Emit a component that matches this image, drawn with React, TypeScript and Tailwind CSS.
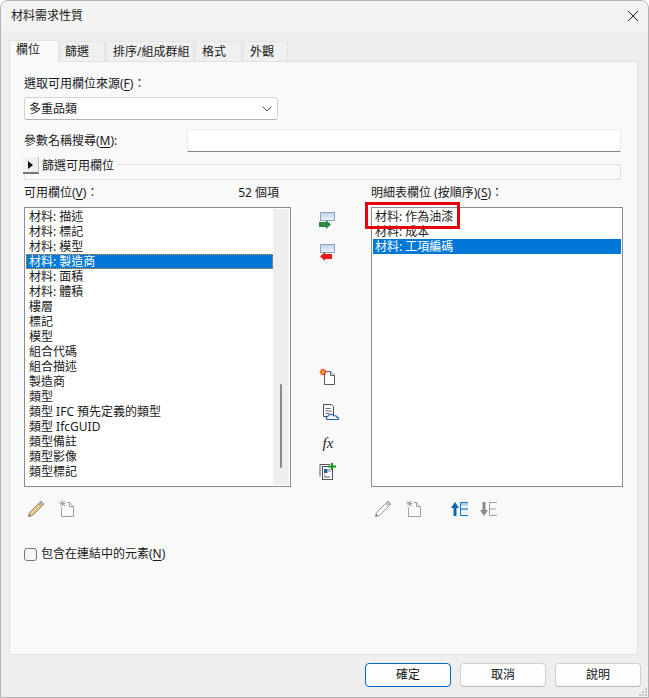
import React from "react";

const leftItems = ["材料: 描述","材料: 標記","材料: 模型","材料: 製造商","材料: 面積","材料: 體積","樓層","標記","模型","組合代碼","組合描述","製造商","類型","類型 IFC 預先定義的類型","類型 IfcGUID","類型備註","類型影像","類型標記"];

const U = ({ children }: { children: React.ReactNode }) => <span className="underline underline-offset-2">{children}</span>;

const Bar = ({ color, dir }: { color: string; dir: "r" | "l" }) => (
  <svg width="18" height="18" viewBox="0 0 18 18" className="block">
    <defs>
      <linearGradient id={"g" + dir} x1="0" y1="0" x2="0" y2="1">
        <stop offset="0" stopColor="#b9d3f0" />
        <stop offset="1" stopColor="#eef4fb" />
      </linearGradient>
    </defs>
    <rect x="2.5" y="0.5" width="14" height="8" fill={`url(#g${dir})`} stroke="#8fa3bb" />
    {dir === "r"
      ? <path d="M0 10h7V8l5 4.5-5 4.5v-2H0z" fill={color} transform="translate(1 0)" />
      : <path d="M13 10H6V8l-5 4.5L6 17v-2h7z" fill={color} transform="translate(1 0)" />}
  </svg>
);

const NewDoc = () => (
  <svg width="18" height="18" viewBox="0 0 18 18" className="block">
    <path d="M5.500 3.500h6l4 4v9h-10z" fill="#fbfbfb" stroke="#555b63" />
    <path d="M11.500 3.500v4h4" fill="#e4e6e9" stroke="#555b63" />
    <path d="M4 0l1 2 2-1-1 2 2 1-2 1 1 2-2-1-1 2-1-2-2 1 1-2-2-1 2-1-1-2 2 1z" fill="#ee3311" />
    <circle cx="4" cy="4" r="1.400" fill="#ffd21f" />
  </svg>
);

const DocCloud = () => (
  <svg width="17" height="17" viewBox="0 0 17 17" className="block">
    <path d="M.5.500h8l2 2v10h-10z" fill="#fbfbfb" stroke="#4c5258" />
    <path d="M2.500 4.500h5M2.500 7h6M2.500 9.500h4" stroke="#6a7077" />
    <path d="M5 15.500c-2 0-2.300-2.800-.3-3 .5-2.200 4.800-3 6.200-.5 1.800-.8 3.500.5 3.200 1.400 1.800 0 1.900 2.100.4 2.100z" fill="#fff" stroke="#2458c6" strokeWidth="1.200" />
  </svg>
);

const Param = () => (
  <svg width="18" height="18" viewBox="0 0 18 18" className="block">
    <path d="M1 13.500V1.500h10" fill="none" stroke="#555b63" />
    <rect x="3.500" y="3.500" width="10" height="13" fill="#fbfbfb" stroke="#4c5258" />
    <rect x="5" y="6" width="3.500" height="4" fill="#1d5f9e" />
    <rect x="9" y="6" width="3" height="3" fill="#b7c0c9" />
    <path d="M5 14h6M5 12h1" stroke="#555" />
    <path d="M12 0h2v2.500h3v2h-3V7h-2V4.500H9.500v-2H12z" fill="#0a9a18" />
  </svg>
);

const Pencil = ({ muted }: { muted?: boolean }) => (
  <svg width="18" height="18" viewBox="0 0 18 18" className="block">
    <path d="M1.500 16.500l1-4L12.500 2.500l3 3-10 10z" fill={muted ? "#fafafa" : "#e6c98a"} stroke={muted ? "#9a9a9a" : "#9a8f7c"} />
    <path d="M11.500 3.500l3 3" stroke={muted ? "#9a9a9a" : "#8b8b8b"} />
    <path d="M12.500 2.500l1.500-1.500 3 3-1.500 1.500z" fill={muted ? "#c8c8c8" : "#bcbcbc"} stroke="#9a9a9a" />
    <path d="M1.500 16.500l.6-2.500 1.900 1.900z" fill="#777" />
  </svg>
);

const GrayDoc = () => (
  <svg width="16" height="18" viewBox="0 0 16 18" className="block">
    <path d="M2.500 7.500v9h12v-10l-4-4H8" fill="#fafafa" stroke="#a0a0a0" />
    <path d="M10.500 2.500v4h4" fill="#e8e8e8" stroke="#a0a0a0" />
    <path d="M1 1l5 5M6 1L1 6M3.500.5v6M.5 3.500h6" stroke="#a8a8a8" />
  </svg>
);

const UpE = () => (
  <svg width="17" height="16" viewBox="0 0 17 16" className="block">
    <defs>
      <linearGradient id="ue" x1="0" y1="0" x2="0" y2="1">
        <stop offset="0" stopColor="#a9cdec" />
        <stop offset="1" stopColor="#f0f6fc" />
      </linearGradient>
    </defs>
    <path d="M4 1L0 7h2.500v8h3V7H8z" fill="#0f67ad" />
    <rect x="10" y="2" width="7" height="12" fill="url(#ue)" />
    <path d="M10 6h7M10 10.500h7" stroke="#fff" strokeWidth="1.500" />
    <path d="M17 1.500H9.500v13H17M10 8h7" fill="none" stroke="#0f7ac4" />
  </svg>
);

const DownE = () => (
  <svg width="17" height="16" viewBox="0 0 17 16" className="block">
    <path d="M2.500 1v8H0l4 6 4-6H5.500V1z" fill="#8a8a8a" />
    <path d="M17 1.500H9.500v13H17M9.500 8H16" fill="none" stroke="#a0a0a0" />
  </svg>
);

const Fx = () => (
  <span className="flex h-[18px] w-[18px] items-center justify-center font-['Liberation_Serif',serif] text-[15px] italic leading-none text-[#222]">fx</span>
);

const Btn = ({ children, primary }: { children: React.ReactNode; primary?: boolean }) => (
  <button className={`h-[24px] w-[86px] rounded-[4px] border bg-[#fdfdfd] text-[12px] leading-none text-[#111] ${primary ? "border-[#0067c0]" : "border-[#d0d0d0] border-b-[#b8b8b8]"}`}>{children}</button>
);

const tabCls = "flex h-[20px] items-center border border-b-0 border-[#e2e2e2] bg-[#f0f0f0] pl-[4px] mr-px";

export default function App() {
  return (
    <div className="relative flex h-[698px] w-[649px] flex-col overflow-hidden rounded-t-[8px] border border-[#b2b2b2] bg-[#eeeeee] font-['Noto_Sans','Noto_Sans_CJK_TC',sans-serif] text-[12px] leading-[16px] text-[#1a1a1a]">
      <div className="flex h-[30px] shrink-0 items-center justify-between bg-[#f3f3f3] pl-[10px] pr-[10px]">
        <span>材料需求性質</span>
        <svg width="10" height="10" viewBox="0 0 10 10" className="block"><path d="M0 0l10 10M10 0L0 10" stroke="#222" strokeWidth="1" /></svg>
      </div>

      <div className="flex h-[30px] shrink-0 items-end pl-[8px]">
        <div className="relative z-10 mb-[-1px] mr-px flex h-[22px] w-[50px] items-start border border-b-0 border-[#e2e2e2] bg-[#f9f9f9] pl-[6px] pt-[1px]">欄位</div>
        <div className={`${tabCls} w-[45px]`}>篩選</div>
        <div className={`${tabCls} w-[88px] pl-[6px]`}>排序/組成群組</div>
        <div className={`${tabCls} w-[47px] pl-[6px]`}>格式</div>
        <div className={`${tabCls} w-[45px] pl-[6px]`}>外觀</div>
      </div>

      <div className="ml-[8px] h-[594px] w-[629px] shrink-0 border border-[#e2e2e2] bg-[#f9f9f9] pl-[14px] pt-[14px]">
        <div className="h-[16px]">選取可用欄位來源(<U>F</U>)：</div>

        <div className="mt-[5px] flex h-[23px] w-[254px] items-center justify-between rounded-[3px] border border-[#d4d4d4] border-b-[#b4b4b4] bg-white pl-[4px] pr-[5px]">
          <span>多重品類</span>
          <svg width="10" height="6" viewBox="0 0 10 6" className="block"><path d="M.5.500L5 5 9.500.500" fill="none" stroke="#555" /></svg>
        </div>

        <div className="mt-[9px] flex w-[597px] items-center justify-between">
          <span>參數名稱搜尋(<U>M</U>):</span>
          <div className="h-[23px] w-[434px] border border-[#ebebeb] border-b-[#8a8a8a] bg-white" />
        </div>

        <div className="mt-[12px] h-[16px] w-[597px] border border-[#dfdfdf]">
          <div className="mt-[-8px] flex w-fit items-center bg-[#f9f9f9] pr-[3px]">
            <div className="ml-[-2px] flex h-[17px] w-[16px] items-center justify-center border-b-2 border-r border-b-[#777] border-r-[#bbb] bg-[#f0f0f0]">
              <svg width="5" height="8" viewBox="0 0 5 8" className="block"><path d="M0 0l5 4-5 4z" fill="#111" /></svg>
            </div>
            <span className="ml-[3px]">篩選可用欄位</span>
          </div>
        </div>

        <div className="mt-[5px] flex h-[16px]">
          <div className="flex w-[255px] justify-between">
            <span>可用欄位(<U>V</U>)：</span>
            <span>52 個項</span>
          </div>
          <span className="ml-[92px]">明細表欄位 (按順序)(<U>S</U>)：</span>
        </div>

        <div className="mt-[6px] flex h-[280px]">
          <div className="flex h-full w-[267px] border border-[#8a8d93] bg-white p-px">
            <div className="flex-1">
              {leftItems.map((t, i) =>
                i === 3 ? (
                  <div key={t} className="flex h-[15px] items-center border border-dotted border-[#f08a1d] bg-[#0078d7] pl-[2px] leading-[13px] text-white">{t}</div>
                ) : (
                  <div key={t} className="flex h-[15px] items-center pl-[3px] leading-[15px]">{t}</div>
                )
              )}
            </div>
            <div className="w-[16px] bg-[#efefef] pl-[7px] pt-[175px]">
              <div className="h-[84px] w-[2px] rounded-full bg-[#8a8a8a]" />
            </div>
          </div>

          <div className="flex w-[80px] flex-col items-start pl-[27px] pt-[5px]">
            <Bar color="#2b8a3e" dir="r" />
            <div className="mt-[14px]"><Bar color="#f01818" dir="l" /></div>
            <div className="ml-[1px] mt-[106px]"><NewDoc /></div>
            <div className="ml-[5px] mt-[18px]"><DocCloud /></div>
            <div className="ml-[1px] mt-[13px]"><Fx /></div>
            <div className="ml-[1px] mt-[11px]"><Param /></div>
          </div>

          <div className="relative h-full w-[252px] border border-[#8a8d93] bg-white p-px">
            <div className="flex h-[15px] items-center pl-[2px] leading-[15px]">材料: 作為油漆</div>
            <div className="flex h-[15px] items-center pl-[2px] leading-[15px]">材料: 成本</div>
            <div className="flex h-[15px] items-center bg-[#0078d7] pl-[2px] leading-[15px] text-white">材料: 工項編碼</div>
            <div className="absolute left-[-7px] top-[-6px] h-[27px] w-[95px] border-[3px] border-[#e8000d]" />
          </div>
        </div>

        <div className="mt-[13px] flex h-[18px]">
          <div className="ml-[3px]"><Pencil /></div>
          <div className="ml-[14px]"><GrayDoc /></div>
          <div className="ml-[299px]"><Pencil muted /></div>
          <div className="ml-[14px]"><GrayDoc /></div>
          <div className="ml-[29px] mt-[1px]"><UpE /></div>
          <div className="ml-[12px] mt-[1px]"><DownE /></div>
        </div>

        <div className="mt-[28px] flex h-[16px] items-center">
          <div className="h-[13px] w-[13px] rounded-[3px] border border-[#777] bg-[#f6f6f6]" />
          <span className="ml-[4px]">包含在連結中的元素(<U>N</U>)</span>
        </div>
      </div>

      <div className="flex justify-end gap-[9px] pr-[7px] pt-[8px]">
        <Btn primary>確定</Btn>
        <Btn>取消</Btn>
        <Btn>說明</Btn>
      </div>

      <svg width="9" height="9" viewBox="0 0 9 9" className="absolute bottom-0 right-0 block">
        <path d="M6 0h2v2H6zM3 3h2v2H3zM6 3h2v2H6zM0 6h2v2H0zM3 6h2v2H3zM6 6h2v2H6z" fill="#c4c4c4" />
      </svg>
    </div>
  );
}
